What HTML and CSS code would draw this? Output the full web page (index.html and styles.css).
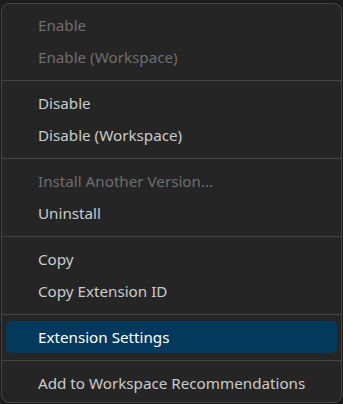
FILE: index.html
```html
<!DOCTYPE html>
<html>
<head>
<meta charset="utf-8">
<link rel="stylesheet" href="styles.css">
</head>
<body>
<div class="menu">
  <div class="item disabled">Enable</div>
  <div class="item disabled">Enable (Workspace)</div>
  <div class="sep"></div>
  <div class="item">Disable</div>
  <div class="item">Disable (Workspace)</div>
  <div class="sep"></div>
  <div class="item disabled">Install Another Version...</div>
  <div class="item">Uninstall</div>
  <div class="sep"></div>
  <div class="item">Copy</div>
  <div class="item">Copy Extension ID</div>
  <div class="sep"></div>
  <div class="item active">Extension Settings</div>
  <div class="sep"></div>
  <div class="item">Add to Workspace Recommendations</div>
</div>
</body>
</html>
```
FILE: styles.css
```css
html, body {
  margin: 0;
  padding: 0;
  background: #1b1b1b;
  width: 343px;
  height: 404px;
  overflow: hidden;
}
.menu {
  box-sizing: border-box;
  margin: 3px 1px 0 1px;
  width: 341px;
  height: 400px;
  background: #252526;
  border: 1px solid #454545;
  border-radius: 8px;
  padding: 5px 4px 3px 4px;
  font-family: "Noto Sans", "Open Sans", sans-serif;
  font-size: 15.2px;
  color: #cccccc;
}
.item {
  height: 32px;
  line-height: 32px;
  padding-left: 32px;
  border-radius: 5px;
  white-space: nowrap;
}
.item.disabled {
  color: #6e6e6e;
}
.item.active {
  background: #04395e;
  color: #ffffff;
}
.sep {
  height: 14px;
  display: flex;
  align-items: center;
  margin: 0 -4px;
}
.sep::before {
  content: "";
  display: block;
  height: 1px;
  width: 100%;
  background: #454545;
}
```
